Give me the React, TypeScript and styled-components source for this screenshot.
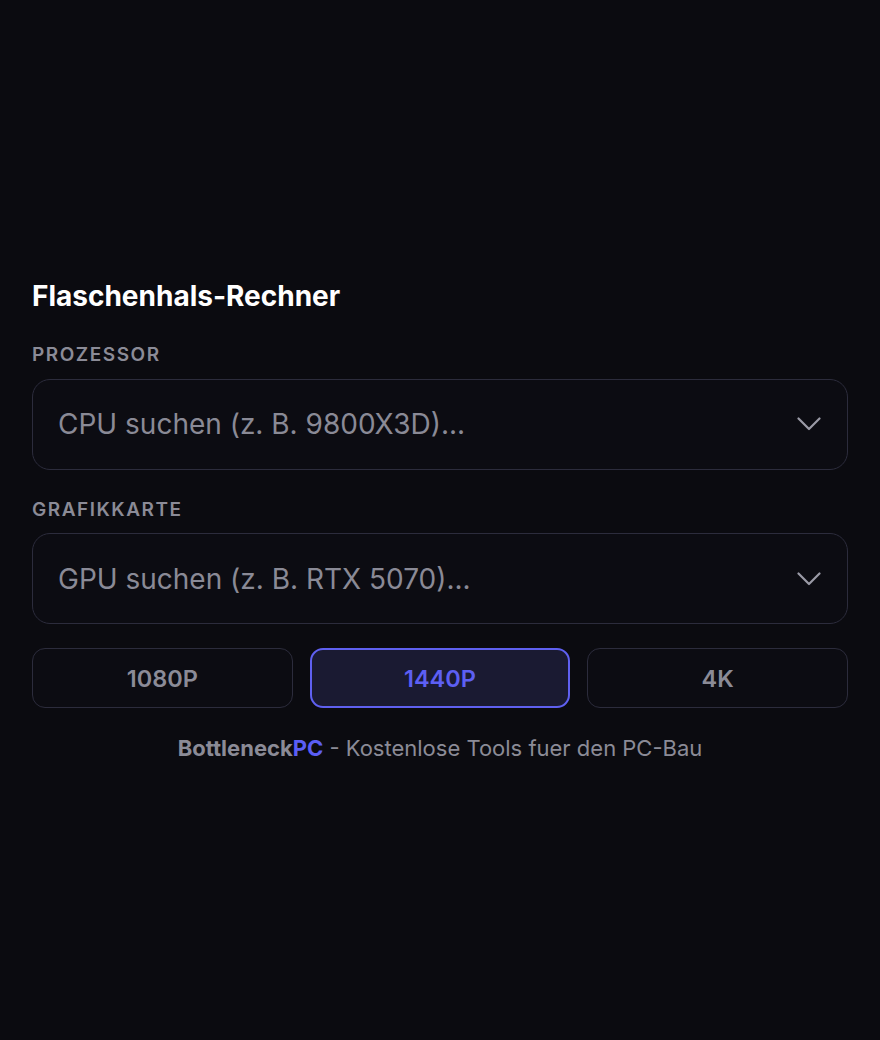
import React, { useState } from "react";
import styled, { createGlobalStyle } from "styled-components";

const GlobalStyle = createGlobalStyle`
  html, body {
    margin: 0;
    padding: 0;
    background: #0b0b10;
  }
  body {
    font-family: Inter, "Noto Sans", "Liberation Sans", sans-serif;
    color: #f4f4f6;
  }
  * { box-sizing: border-box; }
`;

const Page = styled.main`
  min-height: 100vh;
  display: flex;
  flex-direction: column;
  justify-content: center;
  padding: 3px 32px 0;
`;

const Title = styled.h1`
  margin: 0 0 28px;
  font-size: 28px;
  line-height: 1.3;
  font-weight: 700;
  color: #ffffff;
`;

const Field = styled.div`
  display: flex;
  flex-direction: column;
  gap: 10px;
  margin-bottom: 27px;
`;

const Label = styled.label`
  font-size: 19px;
  line-height: 1.4;
  font-weight: 600;
  letter-spacing: 0.08em;
  text-transform: uppercase;
  color: #8b8b97;
`;

const SelectBox = styled.button`
  display: flex;
  align-items: center;
  justify-content: space-between;
  width: 100%;
  height: 91px;
  padding: 0 26px 0 25px;
  background: #0c0c12;
  border: 1px solid #2c2c3c;
  border-radius: 18px;
  font-family: inherit;
  font-size: 28px;
  font-weight: 400;
  color: #8a8a96;
  text-align: left;
  cursor: pointer;
`;

const Chevron = styled.svg`
  flex: none;
  width: 24px;
  height: 14px;
  color: #9a9aa6;
`;

const ResRow = styled.div`
  display: grid;
  grid-template-columns: repeat(3, 1fr);
  gap: 17px;
  margin-top: -3px;
  margin-bottom: 24px;
`;

const ResButton = styled.button<{ $active?: boolean }>`
  height: 60px;
  border-radius: 13px;
  border: ${(p) => (p.$active ? "2px solid #5f60f0" : "1px solid #2c2c3c")};
  background: ${(p) => (p.$active ? "#1a1a32" : "#0c0c12")};
  color: ${(p) => (p.$active ? "#5d5ff3" : "#8b8b97")};
  font-family: inherit;
  font-size: 23.5px;
  font-weight: 600;
  cursor: pointer;
`;

const Footer = styled.p`
  margin: 0;
  text-align: center;
  font-size: 22px;
  line-height: 1.5;
  color: #8b8b97;
`;

const Brand = styled.strong<{ $accent?: boolean }>`
  font-weight: 700;
  color: ${(p) => (p.$accent ? "#5b5ef5" : "#8b8b97")};
`;

const ChevronIcon = () => (
  <Chevron viewBox="0 0 24 14" fill="none" aria-hidden>
    <path
      d="M1.5 1.5 L12 12 L22.5 1.5"
      stroke="currentColor"
      strokeWidth="2.2"
      strokeLinecap="round"
      strokeLinejoin="round"
    />
  </Chevron>
);

export default function App() {
  const [res, setRes] = useState("1440P");
  return (
    <>
      <GlobalStyle />
      <Page>
        <Title>Flaschenhals-Rechner</Title>
        <Field>
          <Label>Prozessor</Label>
          <SelectBox type="button">
            <span>CPU suchen (z. B. 9800X3D)...</span>
            <ChevronIcon />
          </SelectBox>
        </Field>
        <Field>
          <Label>Grafikkarte</Label>
          <SelectBox type="button">
            <span>GPU suchen (z. B. RTX 5070)...</span>
            <ChevronIcon />
          </SelectBox>
        </Field>
        <ResRow>
          {["1080P", "1440P", "4K"].map((r) => (
            <ResButton key={r} $active={r === res} onClick={() => setRes(r)}>
              {r}
            </ResButton>
          ))}
        </ResRow>
        <Footer>
          <Brand>Bottleneck</Brand>
          <Brand $accent>PC</Brand> - Kostenlose Tools fuer den PC-Bau
        </Footer>
      </Page>
    </>
  );
}
